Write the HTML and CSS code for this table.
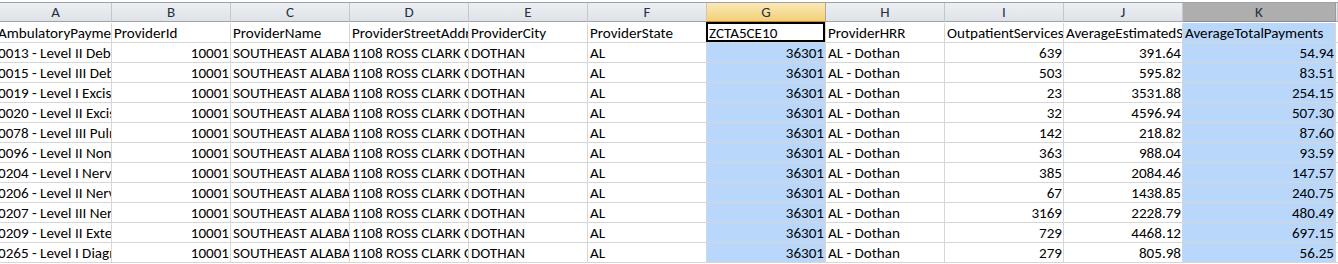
FILE: index.html
```html
<!DOCTYPE html>
<html>
<head>
<meta charset="utf-8">
<link rel="stylesheet" href="styles.css">
</head>
<body>
<div class="sheet">
  <div class="row head">
    <div class="h">A</div><div class="h">B</div><div class="h">C</div><div class="h">D</div><div class="h">E</div><div class="h">F</div><div class="h h-act">G</div><div class="h">H</div><div class="h">I</div><div class="h">J</div><div class="h h-sel">K</div><div class="h"></div>
  </div>
  <div class="row">
    <div class="c first">AmbulatoryPaymentClassification</div><div class="c">ProviderId</div><div class="c">ProviderName</div><div class="c">ProviderStreetAddress</div><div class="c">ProviderCity</div><div class="c">ProviderState</div><div class="c active">ZCTA5CE10</div><div class="c">ProviderHRR</div><div class="c">OutpatientServices</div><div class="c">AverageEstimatedSubmittedCharges</div><div class="c sel">AverageTotalPayments</div><div class="c"></div>
  </div>
  <div class="row">
    <div class="c first">0013 - Level II Debridement &amp; Destruction</div><div class="c n">10001</div><div class="c">SOUTHEAST ALABAMA MEDICAL CENTER</div><div class="c">1108 ROSS CLARK CIRCLE</div><div class="c">DOTHAN</div><div class="c">AL</div><div class="c n sel">36301</div><div class="c">AL - Dothan</div><div class="c n">639</div><div class="c n">391.64</div><div class="c n sel">54.94</div><div class="c"></div>
  </div>
  <div class="row">
    <div class="c first">0015 - Level III Debridement &amp; Destruction</div><div class="c n">10001</div><div class="c">SOUTHEAST ALABAMA MEDICAL CENTER</div><div class="c">1108 ROSS CLARK CIRCLE</div><div class="c">DOTHAN</div><div class="c">AL</div><div class="c n sel">36301</div><div class="c">AL - Dothan</div><div class="c n">503</div><div class="c n">595.82</div><div class="c n sel">83.51</div><div class="c"></div>
  </div>
  <div class="row">
    <div class="c first">0019 - Level I Excision/ Biopsy</div><div class="c n">10001</div><div class="c">SOUTHEAST ALABAMA MEDICAL CENTER</div><div class="c">1108 ROSS CLARK CIRCLE</div><div class="c">DOTHAN</div><div class="c">AL</div><div class="c n sel">36301</div><div class="c">AL - Dothan</div><div class="c n">23</div><div class="c n">3531.88</div><div class="c n sel">254.15</div><div class="c"></div>
  </div>
  <div class="row">
    <div class="c first">0020 - Level II Excision/ Biopsy</div><div class="c n">10001</div><div class="c">SOUTHEAST ALABAMA MEDICAL CENTER</div><div class="c">1108 ROSS CLARK CIRCLE</div><div class="c">DOTHAN</div><div class="c">AL</div><div class="c n sel">36301</div><div class="c">AL - Dothan</div><div class="c n">32</div><div class="c n">4596.94</div><div class="c n sel">507.30</div><div class="c"></div>
  </div>
  <div class="row">
    <div class="c first">0078 - Level III Pulmonary Treatment</div><div class="c n">10001</div><div class="c">SOUTHEAST ALABAMA MEDICAL CENTER</div><div class="c">1108 ROSS CLARK CIRCLE</div><div class="c">DOTHAN</div><div class="c">AL</div><div class="c n sel">36301</div><div class="c">AL - Dothan</div><div class="c n">142</div><div class="c n">218.82</div><div class="c n sel">87.60</div><div class="c"></div>
  </div>
  <div class="row">
    <div class="c first">0096 - Level II Noninvasive Physiologic Studies</div><div class="c n">10001</div><div class="c">SOUTHEAST ALABAMA MEDICAL CENTER</div><div class="c">1108 ROSS CLARK CIRCLE</div><div class="c">DOTHAN</div><div class="c">AL</div><div class="c n sel">36301</div><div class="c">AL - Dothan</div><div class="c n">363</div><div class="c n">988.04</div><div class="c n sel">93.59</div><div class="c"></div>
  </div>
  <div class="row">
    <div class="c first">0204 - Level I Nerve Injections</div><div class="c n">10001</div><div class="c">SOUTHEAST ALABAMA MEDICAL CENTER</div><div class="c">1108 ROSS CLARK CIRCLE</div><div class="c">DOTHAN</div><div class="c">AL</div><div class="c n sel">36301</div><div class="c">AL - Dothan</div><div class="c n">385</div><div class="c n">2084.46</div><div class="c n sel">147.57</div><div class="c"></div>
  </div>
  <div class="row">
    <div class="c first">0206 - Level II Nerve Injections</div><div class="c n">10001</div><div class="c">SOUTHEAST ALABAMA MEDICAL CENTER</div><div class="c">1108 ROSS CLARK CIRCLE</div><div class="c">DOTHAN</div><div class="c">AL</div><div class="c n sel">36301</div><div class="c">AL - Dothan</div><div class="c n">67</div><div class="c n">1438.85</div><div class="c n sel">240.75</div><div class="c"></div>
  </div>
  <div class="row">
    <div class="c first">0207 - Level III Nerve Injections</div><div class="c n">10001</div><div class="c">SOUTHEAST ALABAMA MEDICAL CENTER</div><div class="c">1108 ROSS CLARK CIRCLE</div><div class="c">DOTHAN</div><div class="c">AL</div><div class="c n sel">36301</div><div class="c">AL - Dothan</div><div class="c n">3169</div><div class="c n">2228.79</div><div class="c n sel">480.49</div><div class="c"></div>
  </div>
  <div class="row">
    <div class="c first">0209 - Level II Extended EEG, Sleep, and Cardiovascular Studies</div><div class="c n">10001</div><div class="c">SOUTHEAST ALABAMA MEDICAL CENTER</div><div class="c">1108 ROSS CLARK CIRCLE</div><div class="c">DOTHAN</div><div class="c">AL</div><div class="c n sel">36301</div><div class="c">AL - Dothan</div><div class="c n">729</div><div class="c n">4468.12</div><div class="c n sel">697.15</div><div class="c"></div>
  </div>
  <div class="row">
    <div class="c first">0265 - Level I Diagnostic and Screening Ultrasound</div><div class="c n">10001</div><div class="c">SOUTHEAST ALABAMA MEDICAL CENTER</div><div class="c">1108 ROSS CLARK CIRCLE</div><div class="c">DOTHAN</div><div class="c">AL</div><div class="c n sel">36301</div><div class="c">AL - Dothan</div><div class="c n">279</div><div class="c n">805.98</div><div class="c n sel">56.25</div><div class="c"></div>
  </div>
</div>
</body>
</html>
```

FILE: styles.css
```css
html, body {
  margin: 0;
  padding: 0;
  background: #ffffff;
  overflow: hidden;
}

.sheet {
  font-family: Carlito, Calibri, Lato, "Liberation Sans", sans-serif;
  font-size: 15.1px;
  color: #000;
  padding-top: 2px;
}

.row {
  display: grid;
  grid-template-columns: 112px repeat(9, 119px) 153px 1fr;
  height: 20px;
}

.row.head {
  height: 20px;
  border-top: 1px solid #9ea3aa;
}

.h {
  box-sizing: border-box;
  height: 19px;
  background: linear-gradient(#eceff3, #dfe3e8);
  border-right: 1px solid #c4c8ce;
  border-bottom: 1px solid #9ea3aa;
  text-align: center;
  line-height: 18px;
  color: #27313d;
  font-size: 15px;
}

.h-act {
  background: linear-gradient(#fbe9b6, #f3cf79);
  border-right-color: #c9a560;
  border-bottom-color: #c28a30;
}

.h-sel {
  background: #aeaeae;
  border-right-color: #9a9a9a;
  border-bottom-color: #8c8c8c;
}

.c {
  box-sizing: border-box;
  height: 20px;
  border-right: 1px solid #d6d6d6;
  border-bottom: 1px solid #d6d6d6;
  padding: 1px 2px 0 2px;
  line-height: 18px;
  white-space: nowrap;
  overflow: hidden;
}

.c.n {
  text-align: right;
  padding-right: 1px;
}

.c.first {
  text-indent: -4px;
}

.c.sel {
  background: #b8d7fa;
}

.c.active {
  box-shadow: inset 0 0 0 2px #000;
  margin: -1px 0 0 -1px;
  height: 21px;
  padding-left: 3px;
  padding-top: 2px;
}
```
